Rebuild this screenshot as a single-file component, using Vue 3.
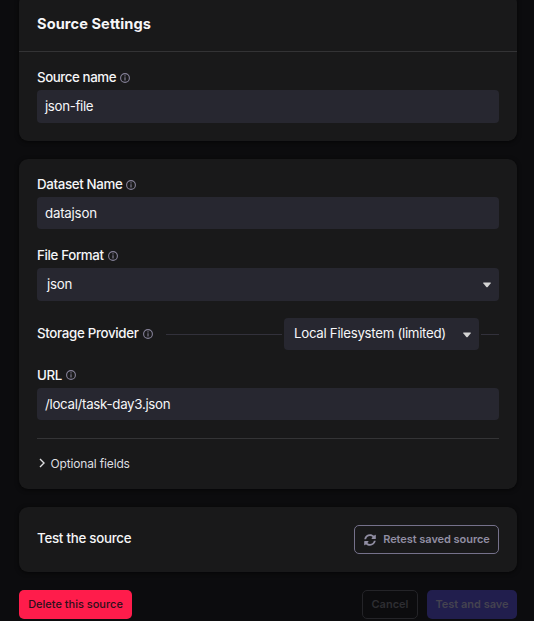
<script setup>
import { h } from 'vue'

const InfoIcon = () =>
  h('svg', { class: 'info', viewBox: '0 0 10 10', width: 10, height: 10 }, [
    h('circle', { cx: 5, cy: 5, r: 4.4, fill: 'none', stroke: '#858198', 'stroke-width': 1.1 }),
    h('path', { d: 'M5 4.2v3.4M5 2.3v1.1', stroke: '#858198', 'stroke-width': 1.1 }),
  ])
</script>

<template>
  <main class="page">
    <section class="card general">
      <h2 class="title"><span class="t-title">Source Settings</span></h2>
      <div class="field">
        <label class="label"><span class="l-source">Source name</span><InfoIcon /></label>
        <div class="input tall"><span class="v-source">json-file</span></div>
      </div>
    </section>

    <section class="card dataset">
      <label class="label"><span class="l-dataset">Dataset Name</span><InfoIcon /></label>
      <div class="input"><span class="v-dataset">datajson</span></div>
      <label class="label second"><span class="l-format">File Format</span><InfoIcon /></label>
      <div class="input tall select">
        <span class="v-format">json</span>
        <svg class="caret" viewBox="0 0 8 6" width="8" height="6"><path d="M.6.5h6.8q.7 0 .3.7L4.7 4.9q-.7.7-1.4 0L.3 1.2Q-.1.5.6.5z" /></svg>
      </div>
      <div class="provider">
        <label class="label"><span class="l-provider">Storage Provider</span><InfoIcon /></label>
        <i class="rule"></i>
        <div class="input select inline">
          <span class="v-provider">Local Filesystem (limited)</span>
          <svg class="caret" viewBox="0 0 8 6" width="8" height="6"><path d="M.6.5h6.8q.7 0 .3.7L4.7 4.9q-.7.7-1.4 0L.3 1.2Q-.1.5.6.5z" /></svg>
        </div>
        <i class="rule end"></i>
      </div>
      <label class="label third"><span class="l-url">URL</span><InfoIcon /></label>
      <div class="input"><span class="v-url">/local/task-day3.json</span></div>
      <div class="optional">
        <svg viewBox="0 0 6 10" width="6" height="10"><path d="M1 1l4 4-4 4" fill="none" stroke="#dedee0" stroke-width="1.4" /></svg>
        <span class="t-optional">Optional fields</span>
      </div>
    </section>

    <section class="card test">
      <span class="t-test">Test the source</span>
      <button class="btn retest">
        <svg viewBox="0 0 512 512" width="12" height="12" fill="#918ea3"><path d="M370.7 133.3C339.5 104 298.9 88 255.8 88c-77.500.1-144.300 53.200-162.800 126.900-1.300 5.400-6.100 9.100-11.700 9.100H24.100c-7.500 0-13.200-6.800-11.800-14.200C33.900 94.900 134.800 8 256 8c66.400 0 126.800 26.100 171.300 68.700L463 41c15.100-15.100 41-4.400 41 17v134c0 13.300-10.700 24-24 24H346c-21.400 0-32.100-25.900-17-41zM32 296h134c21.400 0 32.100 25.900 17 41l-41.800 41.800c31.300 29.300 71.800 45.300 114.900 45.300 77.400-.1 144.300-53.100 162.800-126.800 1.300-5.400 6.100-9.100 11.700-9.100h57.300c7.500 0 13.200 6.800 11.800 14.200C478.100 417.100 377.200 504 256 504c-66.400 0-126.800-26.100-171.300-68.700L49 471c-15.100 15.100-41 4.400-41-17V320c0-13.300 10.700-24 24-24z" /></svg>
        <span class="t-retest">Retest saved source</span>
      </button>
    </section>

    <footer class="actions">
      <button class="btn delete"><span class="t-delete">Delete this source</span></button>
      <button class="btn cancel"><span class="t-cancel">Cancel</span></button>
      <button class="btn save"><span class="t-save">Test and save</span></button>
    </footer>
  </main>
</template>

<style>
body {
  background: #0c0c0e;
  overflow: hidden;
}
</style>

<style scoped>
.page {
  box-sizing: border-box;
  height: 621px;
  padding: 0 17px 0 19px;
  background: #0c0c0e;
  color: #f6f6f8;
  font: 500 13.3px/16px Inter, sans-serif;
  overflow: hidden;
}
span { white-space: nowrap; }
.t-title { letter-spacing: 0.08px; }
.l-source { letter-spacing: -0.42px; }
.l-dataset, .l-format { letter-spacing: -0.34px; }
.l-provider { letter-spacing: -0.32px; }
.l-url { letter-spacing: -0.3px; }
.v-source { letter-spacing: -0.35px; padding-bottom: 1px; }
.v-dataset { letter-spacing: -0.22px; }
.v-format { letter-spacing: -0.2px; padding-bottom: 2px; }
.v-provider { letter-spacing: -0.3px; padding-bottom: 2px; }
.v-url { letter-spacing: -0.3px; }
.t-optional { letter-spacing: -0.16px; }
.t-test { letter-spacing: -0.26px; padding-bottom: 3px; }
.card {
  box-sizing: border-box;
  border-radius: 9px;
  background: #19191a;
  box-shadow: 0 1px 4px rgba(0, 0, 0, 0.6);
}
.general {
  height: 147px;
  margin-top: -6px;
}
.title {
  box-sizing: border-box;
  height: 58px;
  margin: 0;
  padding: 22px 18px 0;
  border-bottom: 1px solid #333335;
  font-size: 14.6px;
  line-height: 16px;
  font-weight: 700;
}
.field { padding: 17px 18px 0; }
.label {
  display: flex;
  align-items: center;
  gap: 4px;
  height: 16px;
}
.info { flex: none; margin-top: 1px; }
.input {
  box-sizing: border-box;
  display: flex;
  align-items: center;
  height: 32px;
  margin-top: 5px;
  padding: 0 8px;
  border-radius: 4px;
  background: #272730;
  font-weight: 400;
}
.tall { height: 33px; }
.select { justify-content: space-between; padding-left: 10px; }
.caret { fill: #d3d3d3; }
.dataset {
  height: 330px;
  margin-top: 18px;
  padding: 17px 18px 0;
}
.second { margin-top: 18px; }
.provider {
  display: flex;
  align-items: center;
  height: 32px;
  margin-top: 17px;
}
.provider .label { margin-bottom: 2px; }
.provider .info { margin-top: 2px; }
.rule {
  flex: 1;
  height: 1px;
  margin: 1px 2px 0 13px;
  background: #32313b;
}
.rule.end { flex: 0 0 18px; margin: 1px 0 0 2px; }
.inline { width: 195px; margin: 0; }
.inline .caret { margin-top: 1px; }
.third { margin-top: 17px; }
.third .info { margin-top: 0; }
.optional {
  display: flex;
  align-items: center;
  gap: 5.6px;
  margin-top: 18px;
  padding: 17px 0 0 2px;
  border-top: 1px solid #343436;
  font-size: 12px;
  font-weight: 400;
  color: #dedee0;
}
.optional svg { margin-bottom: 2px; }
.test {
  display: flex;
  align-items: center;
  justify-content: space-between;
  height: 65px;
  margin-top: 18px;
  padding: 0 18px;
}
.btn {
  box-sizing: border-box;
  display: flex;
  align-items: center;
  justify-content: center;
  height: 29px;
  margin: 0;
  padding: 0 0 1px;
  border: 0;
  border-radius: 5px;
  font: 600 11px/14px Inter, sans-serif;
}
.retest {
  width: 145px;
  gap: 7px;
  padding-left: 1px;
  border: 1px solid #75718b;
  background: transparent;
  color: #918ea3;
}
.retest svg { margin-top: 1px; }
.t-retest { letter-spacing: -0.05px; }
.actions {
  display: flex;
  margin-top: 18px;
}
.delete {
  width: 113px;
  background: #ff1c4b;
  color: #2c101a;
  font-weight: 500;
}
.cancel {
  width: 56px;
  margin-left: auto;
  border: 1px solid #242428;
  background: transparent;
  color: #2e2e32;
}
.save {
  width: 90px;
  margin-left: 9px;
  background: #211e4d;
  color: #454350;
}
</style>
